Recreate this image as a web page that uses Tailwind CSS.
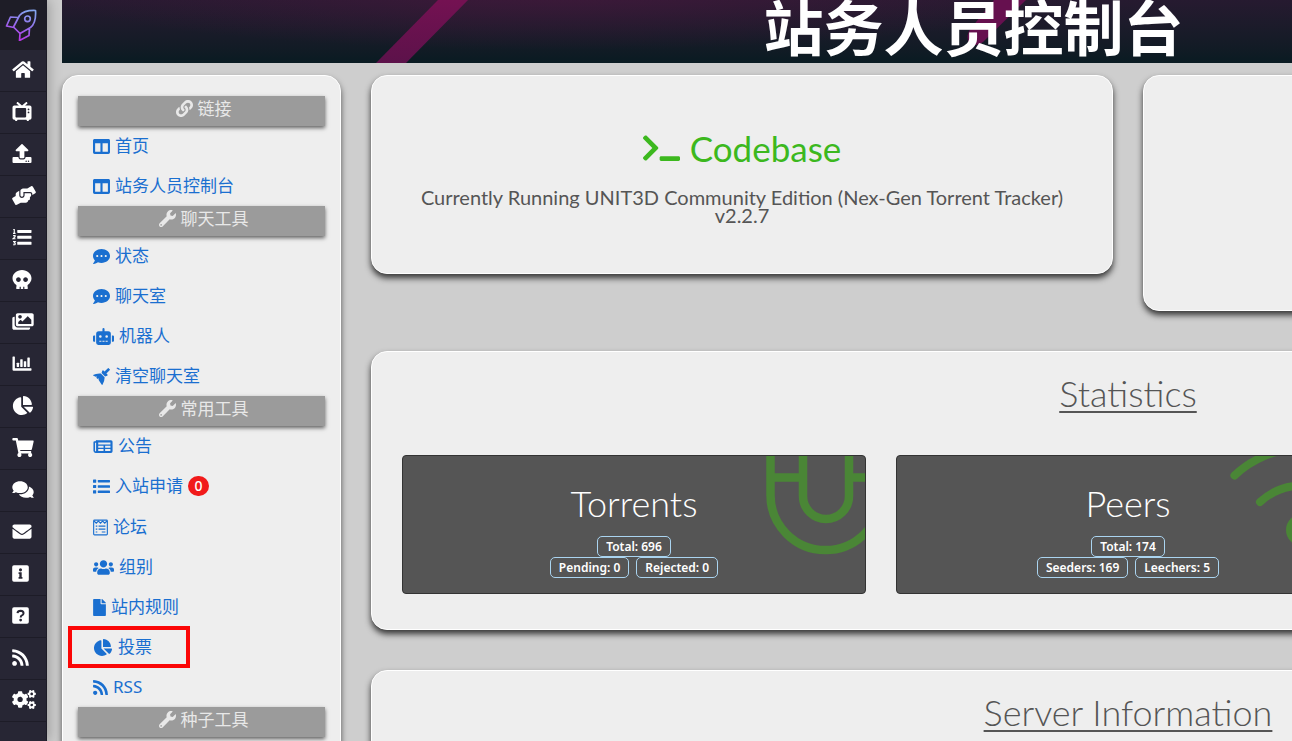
<!DOCTYPE html>
<html lang="zh-CN">
<head>
<meta charset="utf-8">
<title>站务人员控制台</title>
<script src="https://cdn.jsdelivr.net/npm/@tailwindcss/browser@4"></script>
</head>
<body class="bg-[#cecece] font-['Noto_Sans','Noto_Sans_CJK_SC',sans-serif] text-[#555] overflow-hidden h-screen">
<svg class="hidden" aria-hidden="true">
  <symbol id="home" viewBox="0 0 576 512"><path d="M280.37 148.26L96 300.11V464a16 16 0 0 0 16 16l112.06-.29a16 16 0 0 0 15.92-16V368a16 16 0 0 1 16-16h64a16 16 0 0 1 16 16v95.64a16 16 0 0 0 16 16.05L464 480a16 16 0 0 0 16-16V300L295.67 148.26a12.19 12.19 0 0 0-15.3 0zM571.6 251.47L488 182.56V44.05a12 12 0 0 0-12-12h-56a12 12 0 0 0-12 12v72.61L318.47 43a48 48 0 0 0-61 0L4.34 251.47a12 12 0 0 0-1.6 16.9l25.5 31A12 12 0 0 0 45.15 301l235.22-193.74a12.19 12.19 0 0 1 15.3 0L530.9 301a12 12 0 0 0 16.9-1.6l25.5-31a12 12 0 0 0-1.7-16.93z"/></symbol>
  <symbol id="tv" viewBox="0 0 512 512"><path fill-rule="evenodd" d="M464 96H338l58-50a20 20 0 0 0 2-28l-10-12a20 20 0 0 0-28-2L256 92 152 4a20 20 0 0 0-28 2l-10 12a20 20 0 0 0 2 28l58 50H48a48 48 0 0 0-48 48v288a48 48 0 0 0 48 48h16l16 32h40l16-32h240l16 32h40l16-32h16a48 48 0 0 0 48-48V144a48 48 0 0 0-48-48zM368 392c0 13-11 24-24 24-80 6-176 6-240 0a24 24 0 0 1-24-24V184c0-13 11-24 24-24h240c13 0 24 11 24 24zm88-112a24 24 0 1 1-48 0 24 24 0 0 1 48 0zm0-80a24 24 0 1 1-48 0 24 24 0 0 1 48 0z"/></symbol>
  <symbol id="upload" viewBox="0 0 512 512"><path d="M296 384h-80c-13.3 0-24-10.7-24-24V192h-87.7c-17.8 0-26.7-21.5-14.1-34.1L242.3 5.7c7.5-7.5 19.8-7.5 27.3 0l152.2 152.2c12.6 12.6 3.7 34.1-14.1 34.1H320v168c0 13.3-10.7 24-24 24zm216-8v112c0 13.3-10.7 24-24 24H24c-13.3 0-24-10.7-24-24V376c0-13.3 10.7-24 24-24h136v8c0 30.9 25.1 56 56 56h80c30.9 0 56-25.1 56-56v-8h136c13.3 0 24 10.7 24 24zm-124 88c0-11-9-20-20-20s-20 9-20 20 9 20 20 20 20-9 20-20zm64 0c0-11-9-20-20-20s-20 9-20 20 9 20 20 20 20-9 20-20z"/></symbol>
  <symbol id="hands" viewBox="0 0 640 512"><path d="M488 192H336v56c0 39.700-32.300 72-72 72s-72-32.300-72-72V126.400l-64.900 39C107.800 176.900 96 197.800 96 220.200v47.300l-80 46.200C.7 322.500-4.600 342.100 4.300 357.400l80 138.600c8.800 15.300 28.400 20.500 43.700 11.700L231.400 448H368c35.300 0 64-28.700 64-64h16c17.700 0 32-14.300 32-32v-64h8c13.300 0 24-10.700 24-24v-48c0-13.300-10.700-24-24-24zm147.700-37.400L555.700 16C546.900.7 527.300-4.500 512 4.300L408.600 64H306.400c-12 0-23.700 3.400-33.900 9.700L239 94.600c-9.400 5.800-15 16.100-15 27.100V248c0 22.100 17.900 40 40 40s40-17.900 40-40v-88h184c30.900 0 56 25.100 56 56v28.500l80-46.200c15.300-8.900 20.500-28.400 11.700-43.700z"/></symbol>
  <symbol id="listol" viewBox="0 0 512 512"><rect x="128" y="52" width="384" height="80" rx="16"/><rect x="128" y="212" width="384" height="80" rx="16"/><rect x="128" y="372" width="384" height="80" rx="16"/><path d="M20 42h28v104M14 146h68M16 206h54v30l-54 52h64M14 362h60l-28 38q34 4 28 32-6 28-58 18" fill="none" stroke="currentColor" stroke-width="30"/></symbol>
  <symbol id="skull" viewBox="0 0 512 512"><path d="M256 0C114.600 0 0 100.300 0 224c0 70.100 36.900 132.600 94.500 173.700 9.600 6.900 15.200 18.100 13.500 29.900l-9.400 66.200c-1.400 9.600 6 18.200 15.700 18.200H192v-56c0-4.400 3.600-8 8-8h16c4.400 0 8 3.600 8 8v56h64v-56c0-4.400 3.600-8 8-8h16c4.400 0 8 3.600 8 8v56h77.700c9.700 0 17.100-8.600 15.700-18.200l-9.400-66.200c-1.700-11.700 3.800-23 13.500-29.900C475.100 356.600 512 294.100 512 224 512 100.300 397.400 0 256 0zm-96 320c-35.300 0-64-28.700-64-64s28.700-64 64-64 64 28.700 64 64-28.700 64-64 64zm192 0c-35.300 0-64-28.700-64-64s28.700-64 64-64 64 28.700 64 64-28.700 64-64 64z"/></symbol>
  <symbol id="images" viewBox="0 0 576 512"><path d="M480 416v16c0 26.510-21.490 48-48 48H48c-26.510 0-48-21.490-48-48V176c0-26.510 21.490-48 48-48h16v208c0 44.112 35.888 80 80 80h336zm96-80V80c0-26.510-21.490-48-48-48H144c-26.510 0-48 21.490-48 48v256c0 26.510 21.490 48 48 48h384c26.510 0 48-21.490 48-48zM256 128c0 26.510-21.490 48-48 48s-48-21.490-48-48 21.490-48 48-48 48 21.490 48 48zm-96 144l55.515-55.515c4.686-4.686 12.284-4.686 16.971 0L272 256l135.515-135.515c4.686-4.686 12.284-4.686 16.971 0L512 208v112H160v-48z"/></symbol>
  <symbol id="bars" viewBox="0 0 512 512"><path d="M16 64h32a16 16 0 0 1 16 16v304h432a16 16 0 0 1 16 16v32a16 16 0 0 1-16 16H32a32 32 0 0 1-32-32V80a16 16 0 0 1 16-16z"/><rect x="112" y="236" width="66" height="116" rx="12"/><rect x="208" y="140" width="66" height="212" rx="12"/><rect x="304" y="192" width="66" height="160" rx="12"/><rect x="400" y="96" width="66" height="256" rx="12"/></symbol>
  <symbol id="pie" viewBox="0 0 544 512"><path d="M527.790 288H290.500l158.030 158.030c6.040 6.040 15.980 6.530 22.190.68 38.700-36.460 65.320-85.610 73.130-140.860 1.340-9.460-6.510-17.850-16.060-17.850zm-15.830-64.800C503.720 103.740 408.260 8.280 288.800.04 279.680-.59 272 7.100 272 16.240V240h223.770c9.140 0 16.820-7.680 16.190-16.800zM224 288V50.710c0-9.550-8.390-17.400-17.840-16.060C86.990 51.490-4.100 155.600.14 280.370 4.500 408.510 114.830 513.590 243.030 511.980c50.400-.63 96.970-16.870 135.260-44.030 7.900-5.600 8.420-17.230 1.570-24.080L224 288z"/></symbol>
  <symbol id="cart" viewBox="0 0 576 512"><path d="M528.120 301.319l47.273-208C578.806 78.301 567.391 64 551.990 64H159.208l-9.166-44.810C147.758 8.021 137.930 0 126.529 0H24C10.745 0 0 10.745 0 24v16c0 13.255 10.745 24 24 24h69.883l70.248 343.435C147.325 417.100 136 435.222 136 456c0 30.928 25.072 56 56 56s56-25.072 56-56c0-15.674-6.447-29.835-16.824-40h209.647C430.447 426.165 424 440.326 424 456c0 30.928 25.072 56 56 56s56-25.072 56-56c0-22.172-12.888-41.332-31.579-50.405l5.517-24.276c3.413-15.018-8.002-29.319-23.403-29.319H218.117l-6.545-32h293.145c11.206 0 20.920-7.754 23.403-18.681z"/></symbol>
  <symbol id="comments" viewBox="0 0 576 512"><path d="M416 192c0-88.400-93.100-160-208-160S0 103.600 0 192c0 34.300 14.100 65.900 38 92-13.400 30.200-35.500 54.200-35.800 54.500-2.200 2.300-2.800 5.700-1.500 8.700S4.800 352 8 352c36.600 0 66.900-12.300 88.700-25 32.200 15.700 70.300 25 111.300 25 114.900 0 208-71.600 208-160zm122 220c23.900-26 38-57.700 38-92 0-66.900-53.500-124.200-129.300-148.100.9 6.600 1.300 13.300 1.300 20.100 0 105.900-107.700 192-240 192-10.800 0-21.300-.8-31.700-1.900C207.800 439.600 281.800 480 368 480c41 0 79.100-9.200 111.300-25 21.800 12.700 52.100 25 88.700 25 3.200 0 6.100-1.900 7.300-4.800 1.300-2.900.7-6.300-1.500-8.700-.3-.3-22.400-24.200-35.800-54.500z"/></symbol>
  <symbol id="mail" viewBox="0 0 512 512"><path d="M502.300 190.800c3.900-3.100 9.700-.2 9.700 4.700V400c0 26.500-21.500 48-48 48H48c-26.500 0-48-21.500-48-48V195.600c0-5 5.700-7.800 9.700-4.700 22.400 17.400 52.100 39.500 154.100 113.600 21.100 15.400 56.700 47.800 92.200 47.600 35.700.3 72-32.800 92.300-47.600 102-74.100 131.600-96.300 154-113.700zM256 320c23.200.4 56.600-29.200 73.400-41.400 132.700-96.300 142.800-104.700 173.400-128.700 5.800-4.500 9.200-11.500 9.200-18.900v-19c0-26.500-21.500-48-48-48H48c-26.500 0-48 21.500-48 48v19c0 7.400 3.400 14.300 9.200 18.900 30.600 23.900 40.700 32.400 173.400 128.700 16.800 12.200 50.200 41.800 73.400 41.400z"/></symbol>
  <symbol id="info" viewBox="0 0 448 512"><path fill-rule="evenodd" d="M48 32h352a48 48 0 0 1 48 48v352a48 48 0 0 1-48 48H48a48 48 0 0 1-48-48V80a48 48 0 0 1 48-48zM224 116a42 42 0 1 0 0 84 42 42 0 0 0 0-84zM172 224v44h20v84h-20v44h104v-44h-20V224z"/></symbol>
  <symbol id="question" viewBox="0 0 448 512"><rect y="32" width="448" height="448" rx="48"/><path d="M142 190q10-64 84-64 80 4 80 66 0 44-54 68-22 10-22 48" fill="none" stroke="#272634" stroke-width="54"/><circle cx="228" cy="380" r="38" fill="#272634"/></symbol>
  <symbol id="rss" viewBox="0 0 448 512"><path d="M128.081 415.959c0 35.369-28.672 64.041-64.041 64.041S0 451.328 0 415.959s28.672-64.041 64.041-64.041 64.040 28.673 64.040 64.041zm175.660 47.250c-8.354-154.600-132.185-278.587-286.950-286.950C7.656 175.765 0 183.105 0 192.253v48.069c0 8.415 6.490 15.472 14.887 16.018 111.832 7.284 201.473 96.702 208.772 208.772.547 8.397 7.604 14.887 16.018 14.887h48.069c9.149.001 16.489-7.655 15.995-16.790zm144.249.288C439.596 229.677 251.465 40.445 16.503 32.010 7.473 31.686 0 38.981 0 48.016v48.068c0 8.625 6.835 15.645 15.453 15.999 191.179 7.839 344.627 161.316 352.465 352.465.353 8.618 7.373 15.453 15.999 15.453h48.068c9.034-.001 16.329-7.474 16.005-16.504z"/></symbol>
  <symbol id="cogs" viewBox="0 0 640 512">
    <path id="smallgear" d="M512.100 191l-8.200 14.300c-3 5.300-9.400 7.500-15.100 5.400-11.800-4.400-22.600-10.700-32.100-18.600-4.600-3.800-5.800-10.500-2.800-15.700l8.200-14.300c-6.900-8-12.300-17.300-15.900-27.400h-16.500c-6 0-11.200-4.300-12.200-10.300-2-12-2.100-24.600 0-37.100 1-6 6.200-10.400 12.200-10.400h16.500c3.600-10.100 9-19.400 15.900-27.400l-8.200-14.300c-3-5.200-1.900-11.900 2.800-15.700 9.500-7.900 20.400-14.200 32.100-18.600 5.700-2.100 12.100.1 15.100 5.400l8.200 14.300c10.500-1.900 21.200-1.900 31.700 0L552 6.300c3-5.300 9.400-7.500 15.100-5.400 11.800 4.400 22.600 10.700 32.100 18.600 4.600 3.800 5.800 10.500 2.800 15.700l-8.200 14.300c6.900 8 12.300 17.300 15.900 27.400h16.500c6 0 11.200 4.300 12.200 10.300 2 12 2.100 24.600 0 37.100-1 6-6.200 10.400-12.200 10.400h-16.500c-3.600 10.100-9 19.400-15.900 27.400l8.200 14.300c3 5.200 1.900 11.900-2.800 15.700-9.500 7.900-20.400 14.200-32.100 18.600-5.700 2.100-12.100-.1-15.100-5.400l-8.200-14.300c-10.400 1.900-21.200 1.900-31.700 0zm-10.500-58.800c38.500 29.600 82.400-14.300 52.800-52.800-38.500-29.700-82.400 14.300-52.800 52.800z"/>
    <use href="#smallgear" y="299"/>
    <path d="M386.300 286.100l33.700 16.800c10.100 5.800 14.500 18.100 10.500 29.100-8.900 24.200-26.400 46.400-42.600 65.800-7.400 8.900-20.200 11.100-30.300 5.300l-29.100-16.800c-16 13.700-34.600 24.600-54.900 31.700v33.600c0 11.600-8.300 21.600-19.700 23.600-24.600 4.200-50.400 4.400-75.900 0-11.500-2-20-11.900-20-23.600V418c-20.300-7.200-38.900-18-54.900-31.700L74 403c-10 5.800-22.900 3.600-30.300-5.300-16.200-19.400-33.300-41.600-42.200-65.700-4-10.900.4-23.200 10.500-29.100l33.300-16.800c-3.900-20.900-3.900-42.400 0-63.400L12 205.800c-10.100-5.800-14.600-18.100-10.500-29 8.900-24.200 26-46.400 42.200-65.800 7.400-8.900 20.200-11.100 30.300-5.300l29.100 16.800c16-13.700 34.600-24.600 54.900-31.700V57.100c0-11.500 8.200-21.500 19.600-23.500 24.600-4.200 50.500-4.400 76-.1 11.500 2 20 11.900 20 23.600v33.600c20.300 7.200 38.900 18 54.900 31.700l29.100-16.800c10-5.800 22.900-3.600 30.300 5.300 16.200 19.400 33.200 41.600 42.100 65.800 4 10.900.1 23.200-10 29.100l-33.700 16.800c3.900 21 3.900 42.500 0 63.500zm-117.600 21.100c59.200-77-28.700-164.900-105.700-105.700-59.200 77 28.700 164.900 105.700 105.700z"/></symbol>
  <symbol id="link" viewBox="0 0 512 512"><path d="M326.612 185.391c59.747 59.809 58.927 155.698.36 214.590-.11.12-.24.25-.36.37l-67.200 67.200c-59.270 59.270-155.699 59.262-214.960 0-59.270-59.260-59.270-155.700 0-214.960l37.106-37.106c9.840-9.840 26.786-3.300 27.294 10.606.648 17.722 3.826 35.527 9.690 52.721 1.986 5.822.567 12.262-3.783 16.612l-13.087 13.087c-28.026 28.026-28.905 73.660-1.155 101.960 28.024 28.579 74.086 28.749 102.325.51l67.200-67.190c28.191-28.191 28.073-73.757 0-101.830-3.701-3.694-7.429-6.564-10.341-8.569a16.037 16.037 0 0 1-6.947-12.606c-.396-10.567 3.348-21.456 11.698-29.806l21.054-21.055c5.521-5.521 14.182-6.199 20.584-1.731a152.482 152.482 0 0 1 20.522 17.197zM467.547 44.449c-59.261-59.262-155.690-59.270-214.960 0l-67.200 67.200c-.12.12-.25.25-.36.37-58.566 58.892-59.387 154.781.36 214.590a152.454 152.454 0 0 0 20.521 17.196c6.402 4.468 15.064 3.789 20.584-1.731l21.054-21.055c8.350-8.350 12.094-19.239 11.698-29.806a16.037 16.037 0 0 0-6.947-12.606c-2.912-2.005-6.640-4.875-10.341-8.569-28.073-28.073-28.191-73.639 0-101.830l67.200-67.190c28.239-28.239 74.300-28.069 102.325.51 27.750 28.300 26.872 73.934-1.155 101.960l-13.087 13.087c-4.350 4.350-5.769 10.790-3.783 16.612 5.864 17.194 9.042 34.999 9.690 52.721.509 13.906 17.454 20.446 27.294 10.606l37.106-37.106c59.271-59.259 59.271-155.699.001-214.959z"/></symbol>
  <symbol id="wrench" viewBox="0 0 512 512"><path d="M507.730 109.100c-2.240-9.030-13.540-12.090-20.120-5.510l-74.360 74.360-67.880-11.310-11.310-67.880 74.360-74.360c6.620-6.620 3.430-17.900-5.660-20.160-47.380-11.740-99.550.91-136.580 37.930-39.640 39.640-50.550 97.100-34.050 147.200L18.740 402.760c-24.990 24.990-24.990 65.510 0 90.500 24.990 24.990 65.510 24.990 90.500 0l213.210-213.210c50.120 16.710 107.470 5.680 147.370-34.220 37.070-37.070 49.700-89.320 37.910-136.730zM64 472c-13.250 0-24-10.750-24-24 0-13.260 10.750-24 24-24s24 10.740 24 24c0 13.250-10.750 24-24 24z"/></symbol>
  <symbol id="columns" viewBox="0 0 512 512"><path d="M464 32H48C21.490 32 0 53.490 0 80v352c0 26.510 21.490 48 48 48h416c26.510 0 48-21.490 48-48V80c0-26.510-21.490-48-48-48zM224 416H64V160h160v256zm224 0H288V160h160v256z"/></symbol>
  <symbol id="dots" viewBox="0 0 512 512"><path d="M256 32C114.600 32 0 125.100 0 240c0 49.600 21.400 95 57 130.700C44.500 421.100 2.700 466 2.200 466.500c-2.200 2.300-2.800 5.700-1.500 8.700S4.800 480 8 480c66.300 0 116-31.800 140.600-51.400 32.700 12.300 69 19.400 107.400 19.400 141.400 0 256-93.100 256-208S397.400 32 256 32zM128 272c-17.700 0-32-14.300-32-32s14.300-32 32-32 32 14.300 32 32-14.300 32-32 32zm128 0c-17.700 0-32-14.300-32-32s14.300-32 32-32 32 14.300 32 32-14.300 32-32 32zm128 0c-17.700 0-32-14.300-32-32s14.300-32 32-32 32 14.300 32 32-14.300 32-32 32z"/></symbol>
  <symbol id="robot" viewBox="0 0 640 512"><path d="M32,224H64V416H32A32,32,0,0,1,0,384V256A32,32,0,0,1,32,224Zm512-48V448a64,64,0,0,1-64,64H160a64,64,0,0,1-64-64V176a80,80,0,0,1,80-80H288V32a32,32,0,0,1,64,0V96H464A80,80,0,0,1,544,176ZM264,256a40,40,0,1,0-40,40A40,40,0,0,0,264,256Zm-8,128H192v32h64Zm96,0H288v32h64ZM456,256a40,40,0,1,0-40,40A40,40,0,0,0,456,256Zm-8,128H384v32h64ZM640,256V384a32,32,0,0,1-32,32H576V224h32A32,32,0,0,1,640,256Z"/></symbol>
  <symbol id="broom" viewBox="0 0 512 512"><path d="M508 42L470 4a14 14 0 0 0-20 0L346 108l-30-30a22 22 0 0 0-36 8l-22 64 104 104 64-22a22 22 0 0 0 8-36l-30-30L508 62a14 14 0 0 0 0-20zM236 168C150 156 60 186 4 214q-8 8 2 14l72 36 44-10-24 36 42 42 38-22-12 46 92 140q14 20 28 12 70-110 62-228z"/></symbol>
  <symbol id="news" viewBox="0 0 576 512"><path fill-rule="evenodd" d="M112 64h416a48 48 0 0 1 48 48v288a48 48 0 0 1-48 48H64a64 64 0 0 1-64-64V128a32 32 0 0 1 32-32h32a48 48 0 0 1 48-32zM48 144v240a16 16 0 0 0 32 0V144zM144 136v60h368v-60zm0 100v60h160v-60zm208 0v60h160v-60zm-208 96v56h160v-56zm208 0v56h160v-56z"/></symbol>
  <symbol id="listul" viewBox="0 0 512 512"><rect y="48" width="96" height="96" rx="16"/><rect y="208" width="96" height="96" rx="16"/><rect y="368" width="96" height="96" rx="16"/><rect x="144" y="60" width="368" height="72" rx="16"/><rect x="144" y="220" width="368" height="72" rx="16"/><rect x="144" y="380" width="368" height="72" rx="16"/></symbol>
  <symbol id="notes" viewBox="0 0 448 512"><g fill="none" stroke="currentColor" stroke-width="34"><rect x="18" y="34" width="412" height="444" rx="26"/><path d="M30 60l66 66 64-66 64 66 64-66 64 66 66-66M80 216h48M166 216h206M80 304h48M166 304h206M80 392h48M262 392h110"/></g></symbol>
  <symbol id="users" viewBox="0 0 640 512"><path d="M96 224c35.300 0 64-28.700 64-64s-28.700-64-64-64-64 28.700-64 64 28.700 64 64 64zm448 0c35.300 0 64-28.700 64-64s-28.700-64-64-64-64 28.700-64 64 28.700 64 64 64zm32 32h-64c-17.600 0-33.500 7.100-45.100 18.600 40.300 22.100 68.900 62 75.100 109.400h66c17.700 0 32-14.300 32-32v-32c0-35.300-28.700-64-64-64zm-256 0c61.900 0 112-50.100 112-112S381.900 32 320 32 208 82.100 208 144s50.100 112 112 112zm76.800 32h-8.300c-20.800 10-43.900 16-68.500 16s-47.600-6-68.500-16h-8.300C179.600 288 128 339.600 128 403.200V432c0 26.500 21.500 48 48 48h288c26.500 0 48-21.500 48-48v-28.800c0-63.600-51.600-115.200-115.200-115.200zm-223.700-13.400C161.500 263.100 145.600 256 128 256H64c-35.300 0-64 28.700-64 64v32c0 17.700 14.300 32 32 32h65.900c6.300-47.400 34.900-87.300 75.200-109.400z"/></symbol>
  <symbol id="file" viewBox="0 0 384 512"><path d="M224 136V0H24C10.700 0 0 10.700 0 24v464c0 13.300 10.700 24 24 24h336c13.300 0 24-10.700 24-24V160H248c-13.200 0-24-10.800-24-24zm160-14.100v6.100H256V0h6.100c6.400 0 12.500 2.500 17 7l97.900 98c4.500 4.500 7 10.600 7 16.900z"/></symbol>
  <symbol id="terminal" viewBox="0 0 640 512"><path d="M257.981 272.971L63.638 467.314c-9.373 9.373-24.569 9.373-33.941 0L7.029 444.647c-9.357-9.357-9.375-24.522-.04-33.901L161.011 256 6.990 101.255c-9.335-9.379-9.317-24.544.04-33.901l22.667-22.667c9.373-9.373 24.569-9.373 33.941 0L257.981 239.030c9.373 9.372 9.373 24.568 0 33.941zM640 456v-32c0-13.255-10.745-24-24-24H312c-13.255 0-24 10.745-24 24v32c0 13.255 10.745 24 24 24h304c13.255 0 24-10.745 24-24z"/></symbol>
</svg>

<div class="flex h-full min-w-[1900px]">
  <nav aria-label="主菜单" class="w-[47px] shrink-0 bg-[#272634] border-r border-[#1d1c27] text-white shadow-[2px_0_12px_rgba(0,0,0,0.25)]">
    <a href="#" aria-label="UNIT3D" class="flex h-[50px] items-center pl-[5px] bg-[#1e1d27]">
      <svg class="size-8" viewBox="0 0 32 32" fill="none" stroke="url(#lg)" stroke-width="1.700" stroke-linejoin="round"><defs><linearGradient id="lg" gradientUnits="userSpaceOnUse" x1="24" y1="2" x2="14" y2="31"><stop stop-color="#85a5ee"/><stop offset=".5" stop-color="#9270ec"/><stop offset="1" stop-color="#bb35e6"/></linearGradient></defs><path d="M30.500 1.500C23 1.200 17.500 3 14.500 6.500L8.500 18l6.500 6.500 10.500-6C29.500 15.500 31 9 30.500 1.500zM13 8.500L5.500 8 1.500 17l7.500 1.500M15 24.500l-.5 7 9.500-5 .5-7.500"/><circle cx="22.500" cy="9.800" r="2.800"/></svg>
    </a>
    <ul class="[&_a]:flex [&_a]:h-[42px] [&_a]:items-center [&_a]:pl-[12px] [&_a]:pb-[3px] [&_a]:border-b [&_a]:border-[#1d1c27] [&_svg]:h-[19px] [&_svg]:fill-current">
      <li><a href="#" aria-label="首页"><svg class="w-[22px]"><use href="#home"/></svg></a></li>
      <li><a href="#" aria-label="种子"><svg class="w-[20px]"><use href="#tv"/></svg></a></li>
      <li><a href="#" aria-label="上传"><svg class="w-[20px]"><use href="#upload"/></svg></a></li>
      <li><a href="#" aria-label="求种"><svg class="w-[24px]"><use href="#hands"/></svg></a></li>
      <li><a href="#" aria-label="排行"><svg class="w-[20px]"><use href="#listol"/></svg></a></li>
      <li><a href="#" aria-label="墓地"><svg class="w-[20px]"><use href="#skull"/></svg></a></li>
      <li><a href="#" aria-label="相册"><svg class="w-[22px]"><use href="#images"/></svg></a></li>
      <li><a href="#" aria-label="统计"><svg class="w-[20px]"><use href="#bars"/></svg></a></li>
      <li><a href="#" aria-label="投票"><svg class="w-[22px]"><use href="#pie"/></svg></a></li>
      <li><a href="#" aria-label="商店"><svg class="w-[22px]"><use href="#cart"/></svg></a></li>
      <li><a href="#" aria-label="论坛"><svg class="w-[22px]"><use href="#comments"/></svg></a></li>
      <li><a href="#" aria-label="邮件"><svg class="w-[20px]"><use href="#mail"/></svg></a></li>
      <li><a href="#" aria-label="信息"><svg class="w-[17px]"><use href="#info"/></svg></a></li>
      <li><a href="#" aria-label="帮助"><svg class="w-[17px]"><use href="#question"/></svg></a></li>
      <li><a href="#" aria-label="RSS"><svg class="w-[17px]"><use href="#rss"/></svg></a></li>
      <li><a href="#" aria-label="设置"><svg class="w-[24px]"><use href="#cogs"/></svg></a></li>
    </ul>
  </nav>

  <div class="flex-1 px-[15px]">
    <header class="relative flex h-[63px] items-end justify-center overflow-hidden bg-linear-to-b from-[#261a30] to-[#091b22]">
      <div class="absolute inset-0 bg-[radial-gradient(ellipse_520px_60px_at_500px_-10px,rgba(72,24,62,0.7),transparent)]"></div>
      <svg class="absolute left-0 top-0 h-full w-full" aria-hidden="true"><defs><linearGradient id="st" x1="0" y1="0" x2="0" y2="1"><stop stop-color="#741152"/><stop offset="1" stop-color="#5c124a"/></linearGradient></defs><path d="M376 0h30l-62 63h-30z" fill="url(#st)"/><path d="M932 0h32l-43 42q-8 6-14 1-4-8 3-16z" fill="#66104f"/></svg>
      <h1 class="relative text-[60px] leading-[76px] font-bold text-white font-['Noto_Sans_CJK_SC',sans-serif]">站务人员控制台</h1>
    </header>

    <div class="mt-3 flex items-start gap-[30px]">
      <aside class="w-[279px] shrink-0 rounded-2xl border border-white bg-[#eee] px-[15px] py-5 text-[17px] shadow-[0_4px_6px_rgba(0,0,0,0.6)]">
        <div class="[&_h2]:flex [&_h2]:h-[30px] [&_h2]:items-start [&_h2]:justify-center [&_h2]:gap-[5px] [&_h2]:pl-1 [&_h2]:bg-[#9b9b9b] [&_h2]:leading-[26px] [&_h2]:text-[#e8e8e8] [&_h2]:shadow-[0_2px_4px_rgba(0,0,0,0.6)] [&_h2_svg]:mt-1 [&_svg]:h-[17px] [&_svg]:fill-current [&_li]:relative [&_li]:flex [&_li]:h-10 [&_li]:items-center [&_li]:pl-[15px] [&_a]:flex [&_a]:items-center [&_a]:gap-[5px] [&_a]:text-[#1a6fd0] [&_a]:leading-6">
          <h2><svg class="w-[17px]"><use href="#link"/></svg>链接</h2>
          <ul>
            <li><a href="#"><svg class="w-[17px]"><use href="#columns"/></svg>首页</a></li>
            <li><a href="#"><svg class="w-[17px]"><use href="#columns"/></svg>站务人员控制台</a></li>
          </ul>
          <h2><svg class="w-[17px]"><use href="#wrench"/></svg>聊天工具</h2>
          <ul>
            <li><a href="#"><svg class="w-[17px]"><use href="#dots"/></svg>状态</a></li>
            <li><a href="#"><svg class="w-[17px]"><use href="#dots"/></svg>聊天室</a></li>
            <li><a href="#"><svg class="w-[21px]"><use href="#robot"/></svg>机器人</a></li>
            <li><a href="#"><svg class="w-[17px]"><use href="#broom"/></svg>清空聊天室</a></li>
          </ul>
          <h2><svg class="w-[17px]"><use href="#wrench"/></svg>常用工具</h2>
          <ul>
            <li><a href="#"><svg class="w-[20px]"><use href="#news"/></svg>公告</a></li>
            <li class="mb-px"><a href="#"><svg class="w-[17px]"><use href="#listul"/></svg>入站申请 <span class="flex h-5 w-[21px] items-center justify-center rounded-full bg-[#f11a1a] text-[14px] leading-5 font-medium text-white">0</span></a></li>
            <li><a href="#"><svg class="w-[15px]"><use href="#notes"/></svg>论坛</a></li>
            <li><a href="#"><svg class="w-[21px]"><use href="#users"/></svg>组别</a></li>
            <li><a href="#"><svg class="w-[13px]"><use href="#file"/></svg>站内规则</a></li>
            <li><a href="#"><svg class="w-[20px]"><use href="#pie"/></svg>投票</a><span class="pointer-events-none absolute -top-px -left-[10px] h-[42px] w-[122px] border-4 border-[#fb0606]"></span></li>
            <li><a href="#"><svg class="w-[15px]"><use href="#rss"/></svg>RSS</a></li>
          </ul>
          <h2><svg class="w-[17px]"><use href="#wrench"/></svg>种子工具</h2>
        </div>
      </aside>

      <main class="flex-1 font-['Lato',sans-serif]">
        <div class="grid grid-cols-2 items-start gap-[30px]">
          <section class="rounded-2xl border border-white bg-[#eee] px-5 pt-[52px] pb-[49px] text-center shadow-[0_4px_6px_rgba(0,0,0,0.75)]">
            <h2 class="flex items-center justify-center gap-[10px] text-[35px] leading-[40px] text-[#3cb81e]"><svg class="h-[30px] w-[37px] fill-current"><use href="#terminal"/></svg>Codebase</h2>
            <p class="mt-5 text-[20px] leading-[18px]">Currently Running UNIT3D Community Edition (Nex-Gen Torrent Tracker)<br>v2.2.7</p>
          </section>
          <section class="h-[236px] rounded-2xl border border-white bg-[#eee] shadow-[0_4px_6px_rgba(0,0,0,0.75)]"></section>
        </div>

        <section class="mt-10 rounded-2xl border border-white bg-[#eee] px-[30px] pt-[21px] pb-[35px] shadow-[0_4px_6px_rgba(0,0,0,0.75)]">
          <h2 class="text-center text-[36px] leading-10 font-light underline decoration-2 underline-offset-4">Statistics</h2>
          <div class="mt-[42px] grid grid-cols-3 gap-[30px] text-center text-white [&>div]:relative [&>div]:h-[139px] [&>div]:overflow-hidden [&>div]:rounded-[4px] [&>div]:border [&>div]:border-[#333] [&>div]:bg-[#555] [&>div]:pt-[27px] [&_h3]:text-[36px] [&_h3]:leading-10 [&_h3]:font-light [&_div>span]:rounded-[5px] [&_div>span]:border [&_div>span]:border-[#aad4f0] [&_div>span]:px-2 [&_div>span]:text-[12px] [&_div>span]:leading-[19px] [&_div>span]:font-semibold [&_div>span]:font-['Noto_Sans',sans-serif]">
            <div>
              <svg class="absolute left-[363px] top-0 h-[100px] w-[120px]" viewBox="766 456 120 100" fill="none" stroke="#4a8636" stroke-width="9" aria-hidden="true"><path d="M770.500 450v45a55 55 0 0 0 110 0v-45M803 450v46a23 23 0 0 0 46 0v-46M770 477.500h33M849 477.500h33" stroke-width="8.500"/></svg>
              <h3>Torrents</h3>
              <div class="mt-[13px] flex justify-center"><span>Total: 696</span></div>
              <div class="flex justify-center gap-[7px]"><span>Pending: 0</span><span>Rejected: 0</span></div>
            </div>
            <div>
              <svg class="absolute left-[333px] top-0 h-[100px] w-[144px]" viewBox="1230 456 144 100" fill="none" stroke="#4a8636" stroke-width="8" stroke-linecap="round" aria-hidden="true"><path d="M1234.500 475.500a98 98 0 0 1 135 0M1260 502a62 62 0 0 1 84 0"/><circle cx="1302" cy="530" r="16" fill="#4a8636" stroke="none"/></svg>
              <h3>Peers</h3>
              <div class="mt-[13px] flex justify-center"><span>Total: 174</span></div>
              <div class="flex justify-center gap-[7px]"><span>Seeders: 169</span><span>Leechers: 5</span></div>
            </div>
          </div>
        </section>

        <section class="mt-10 h-[279px] rounded-2xl border border-white bg-[#eee] px-[30px] pt-[21px] shadow-[0_4px_6px_rgba(0,0,0,0.75)]">
          <h2 class="text-center text-[36px] leading-10 font-light underline decoration-2 underline-offset-4">Server Information</h2>
        </section>
      </main>
    </div>
  </div>
</div>
</body>
</html>
